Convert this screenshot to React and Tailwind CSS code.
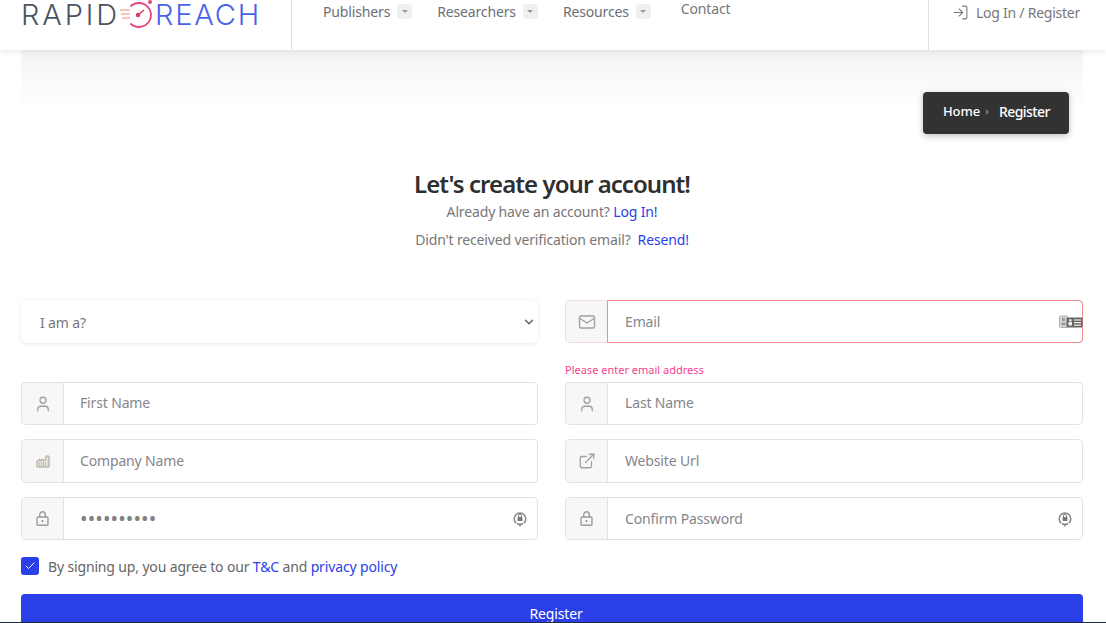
import React from 'react';
import { Mail, User, ExternalLink, LogIn, ChevronDown, Check } from 'lucide-react';

function Caret() {
  return (
    <span className="ml-[7px] w-[15px] h-[15px] rounded-[3px] bg-[#f0f0f0] flex items-center justify-center">
      <span className="w-0 h-0 border-x-[3px] border-x-transparent border-t-[3px] border-t-[#999999]"></span>
    </span>
  );
}

function FactoryIcon() {
  return (
    <svg width="14" height="13" viewBox="0 0 14 13" fill="none">
      <path d="M1 12V6l3-2v2l3-2v2l3-2V1h3v11z" fill="#e4e0da" stroke="#a8a29a" strokeWidth="1" />
      <path d="M3 8h8M3 10h8" stroke="#a8a29a" strokeWidth="1" strokeDasharray="1 1" />
    </svg>
  );
}

function LockIcon() {
  return (
    <svg width="13" height="15" viewBox="0 0 13 15" fill="none">
      <rect x="1" y="6" width="11" height="8.2" rx="1" stroke="#a09a94" strokeWidth="1.4" />
      <path d="M3.7 6V3.6a2.8 2.8 0 0 1 5.6 0V6" stroke="#a09a94" strokeWidth="1.4" />
      <circle cx="6.5" cy="10" r="1" fill="#8f8a85" />
    </svg>
  );
}

function KeyIcon() {
  return (
    <svg width="14" height="16" viewBox="0 0 14 16" fill="none">
      <path d="M3.2 12.2A5.8 5.8 0 1 1 10.8 12.2" stroke="#8a8a8a" strokeWidth="1.6" />
      <rect x="4.6" y="6" width="4.8" height="4" rx="0.6" fill="#777777" />
      <path d="M5.4 6V5a1.6 1.6 0 0 1 3.2 0v1" stroke="#777777" strokeWidth="1" />
      <path d="M4 12.6c1.8 1 4.2 1 6 0M7 13v2.4" stroke="#777777" strokeWidth="1.4" />
    </svg>
  );
}

function CardIcon() {
  return (
    <svg width="24" height="14" viewBox="0 0 24 14" fill="none">
      <rect x="0.5" y="1" width="8" height="11.5" rx="1" fill="#d8d8d8" stroke="#b0b0b0" />
      <rect x="3" y="3" width="3" height="3" fill="#9a9a9a" />
      <rect x="2.5" y="7.5" width="4" height="3" fill="#9a9a9a" />
      <rect x="7.5" y="2.5" width="16" height="10" rx="1" fill="#666666" />
      <rect x="10" y="4" width="2.5" height="2.5" rx="1.2" fill="#eeeeee" />
      <rect x="9.5" y="7" width="3.5" height="3.5" fill="#eeeeee" />
      <rect x="15" y="4.4" width="7" height="1.2" fill="#eeeeee" />
      <rect x="15" y="7" width="7" height="1.2" fill="#eeeeee" />
      <rect x="15" y="9.6" width="7" height="1.2" fill="#eeeeee" />
    </svg>
  );
}

function Field({ icon, label, value, trailing, error, tall, right, lift }) {
  return (
    <div className={`flex rounded-[4px] border bg-white ${tall ? 'h-[44px]' : 'h-[43px]'} ${error ? 'border-[#efdcdc]' : 'border-[#e2e2e2]'}`}>
      <div className={`shrink-0 flex items-center justify-center bg-[#f7f7f7] rounded-l-[4px] ${error ? 'w-[41px]' : 'w-[42px] border-r border-r-[#e2e2e2]'}`}>
        {icon}
      </div>
      <div className={`flex flex-1 ${error ? 'border border-[#f28b8b] rounded-r-[4px] -my-px -mr-px' : ''}`}>
        <div className={`flex-1 flex items-center ${right ? 'pl-[17px]' : 'pl-[16px]'} ${value ? 'text-[#808080] text-[20px] tracking-[0.12px]' : 'text-[14px] text-[#85858c]'} ${lift ? 'pb-[2px]' : value ? '' : 'pb-px'}`}>
          {value || label}
        </div>
        {trailing && <div className={`flex items-center ${error ? '-mr-px' : 'pr-[10px]'}`}>{trailing}</div>}
      </div>
    </div>
  );
}

const iconClass = 'text-[#a0a0a0]';

export default function App() {
  return (
    <div className="h-[623px] overflow-hidden bg-white font-['Noto_Sans',sans-serif] tracking-[-0.15px] text-[#777777] relative">
      {/* Header */}
      <header className="relative z-10 h-[50px] flex bg-white shadow-[0_1px_8px_rgba(0,0,0,0.1)]">
        <div className="w-[292px] shrink-0 border-r border-r-[#dddddd] pl-[21px] flex items-start">
          <div className="flex items-start font-['Inter',sans-serif] font-[350] text-[29px] leading-[29px]">
            <span className="text-[#4a5560] tracking-[2.9px]">RAPID</span>
            <svg width="35" height="30" viewBox="0 0 35 30" fill="none" className="shrink-0">
              <path d="M10.5 6.5A12 12 0 1 1 10.5 23.5" stroke="#e4457a" strokeWidth="1.8" />
              <circle cx="30" cy="2" r="2" fill="#e4457a" />
              <circle cx="18" cy="15" r="2.2" fill="#d63a5f" />
              <path d="M18 15l6-5" stroke="#d63a5f" strokeWidth="1.4" />
              <path d="M0 10h10M1 14h9M2 18h8" stroke="#f58a7a" strokeWidth="1.2" />
            </svg>
            <span className="text-[#4a62e8] tracking-[1.8px]">REACH</span>
          </div>
        </div>
        <nav className="flex-1 flex items-start pl-[31px] text-[14px] text-[#6b6f78]">
          <div className="flex items-center mt-[1px] mr-[25px]">Publishers<Caret /></div>
          <div className="flex items-center mt-[1px] mr-[25px]">Researchers<Caret /></div>
          <div className="flex items-center mt-[1px] mr-[30px]">Resources<Caret /></div>
          <div className="-mt-[2px] text-[#777777]">Contact</div>
        </nav>
        <div className="w-[178px] shrink-0 border-l border-l-[#dddddd] pl-[23px] flex items-start pt-[2px] text-[14px] tracking-[-0.25px] text-[#777777]">
          <span className="flex items-center gap-[7px]">
            <LogIn size={17} strokeWidth={1.5} />
            Log In / Register
          </span>
        </div>
      </header>

      <main className="px-[21px] pr-[23px]">
        {/* Breadcrumb band */}
        <div className="relative h-[84px] pt-[42px] pr-[14px] flex justify-end items-start">
          <div className="absolute inset-x-0 top-0 h-[60px] bg-gradient-to-b from-[#f4f4f4] to-white"></div>
          <div className="relative w-[146px] h-[42px] pb-[4px] rounded-[4px] bg-[#323232] shadow-[0_2px_6px_rgba(0,0,0,0.25)] flex items-center pl-[20px] text-[14px] text-white">
            <span className="text-[13px] font-medium tracking-[-0.1px] mt-px">Home</span>
            <span className="ml-[6px] mr-[10px] mt-[2px] w-0 h-0 border-y-[3px] border-y-transparent border-l-[3px] border-l-[#777777]"></span>
            <span className="font-medium tracking-[-0.6px]">Register</span>
          </div>
        </div>

        {/* Heading */}
        <div className="text-center mt-[33px]">
          <h1 className="text-[24px] leading-[34px] font-semibold tracking-[-0.95px] text-[#2f2f2f]">Let's create your account!</h1>
          <p className="text-[14px] leading-[28px] -mt-[3px] text-[#777777]">
            Already have an account? <a className="text-[#2b3fe8]">Log In!</a>
          </p>
          <p className="text-[14px] leading-[28px] text-[#777777]">
            Didn't received verification email?&nbsp; <a className="text-[#2b3fe8]">Resend!</a>
          </p>
        </div>

        {/* Form */}
        <div className="grid grid-cols-[517px_518px] gap-x-[27px] mt-[46px]">
          <div className="h-[43px] rounded-[6px] bg-white shadow-[0_1px_5px_rgba(0,0,0,0.09)] flex items-center justify-between pl-[19px] pr-[2px] pt-px text-[14px] text-[#777777]">
            I am a?
            <ChevronDown size={14} strokeWidth={2.6} className="text-[#666666]" />
          </div>
          <Field right icon={<Mail size={18} strokeWidth={1.8} className={iconClass} />} label="Email" error trailing={<CardIcon />} />

          <div className="h-[39px]"></div>
          <div className="h-[39px] pt-[19px] text-[11px] leading-[16px] tracking-normal text-[#f5408f]">Please enter email address</div>

          <Field lift icon={<User size={18} strokeWidth={1.7} className={iconClass} />} label="First Name" />
          <Field lift right icon={<User size={18} strokeWidth={1.7} className={iconClass} />} label="Last Name" />

          <div className="h-[14px] col-span-2"></div>

          <Field tall icon={<FactoryIcon />} label="Company Name" />
          <Field tall right icon={<ExternalLink size={18} strokeWidth={1.7} className={iconClass} />} label="Website Url" />

          <div className="h-[14px] col-span-2"></div>

          <Field icon={<LockIcon />} value="••••••••••" trailing={<KeyIcon />} />
          <Field right icon={<LockIcon />} label="Confirm Password" trailing={<KeyIcon />} />
        </div>

        {/* Agreement */}
        <div className="flex items-center mt-[14px] text-[14px] text-[#666666]">
          <span className="w-[18px] h-[18px] rounded-[3px] bg-[#2b3fe8] flex items-center justify-center mr-[9px]">
            <Check size={12} strokeWidth={2} className="text-white" />
          </span>
          <span className="pt-[2px]">By signing up, you agree to our <a className="text-[#2b3fe8]">T&amp;C</a> and <a className="text-[#2b3fe8]">privacy policy</a></span>
        </div>

        <button className="mt-[17px] w-full h-[40px] pb-[2px] pl-[8px] rounded-[4px] bg-[#2b3fe8] text-white text-[14px] block">
          Register
        </button>
      </main>
      <div className="absolute inset-x-0 bottom-0 h-px bg-[#1f2937]"></div>
    </div>
  );
}
